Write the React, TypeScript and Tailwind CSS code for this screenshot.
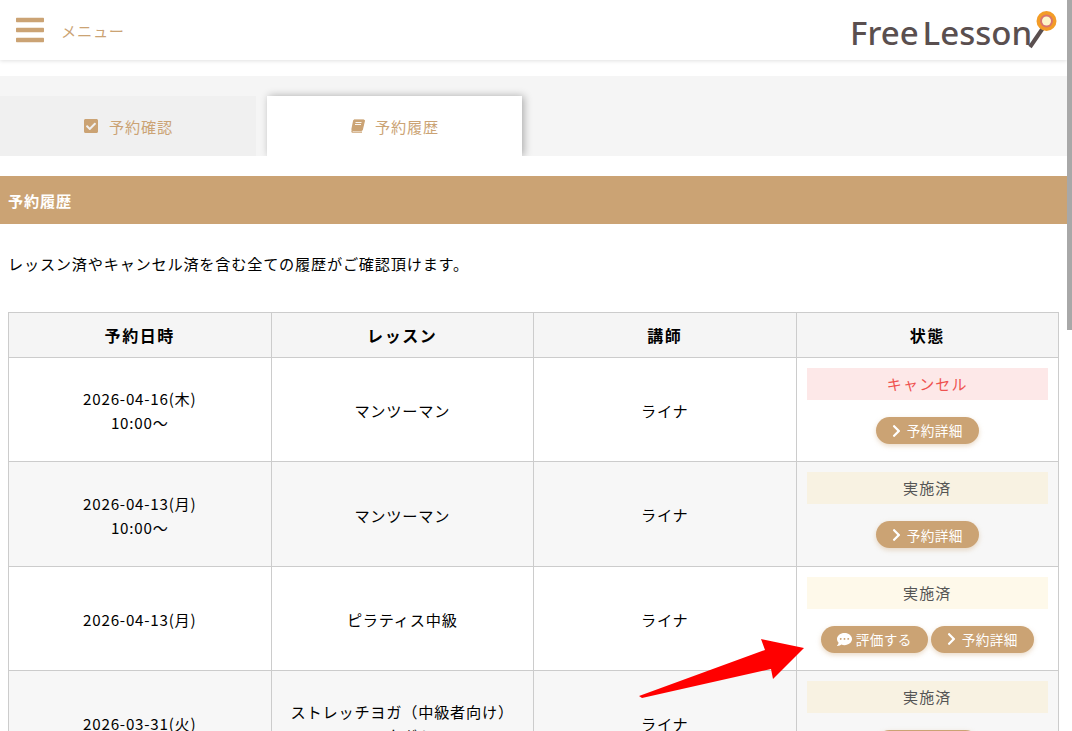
import { FaBars, FaCheckSquare, FaChevronRight, FaCommentDots } from 'react-icons/fa';

const FONT = "font-['Noto_Sans_CJK_JP','Noto_Sans',sans-serif]";

type Row = {
  date: string[];
  lesson: string[];
  status: string;
  statusClass: string;
  review?: boolean;
};

const rows: Row[] = [
  {
    date: ['2026-04-16(木)', '10:00〜'],
    lesson: ['マンツーマン'],
    status: 'キャンセル',
    statusClass: 'bg-[#fde8e8] text-[#ef5350]',
  },
  {
    date: ['2026-04-13(月)', '10:00〜'],
    lesson: ['マンツーマン'],
    status: '実施済',
    statusClass: 'bg-[#f8f2e2] text-[#555555]',
  },
  {
    date: ['2026-04-13(月)'],
    lesson: ['ピラティス中級'],
    status: '実施済',
    statusClass: 'bg-[#fef9ea] text-[#555555]',
    review: true,
  },
  {
    date: ['2026-03-31(火)'],
    lesson: ['ストレッチヨガ（中級者向け）', 'コタガト'],
    status: '実施済',
    statusClass: 'bg-[#f8f2e2] text-[#555555]',
  },
];

function PillButton({ icon, label }: { icon: React.ReactNode; label: string }) {
  return (
    <span className="flex h-[27px] items-center gap-1 rounded-full bg-[#cba374] px-4 text-[13.6px] tracking-[0.03em] text-white shadow-[0_2px_5px_rgba(203,163,116,0.4)]">
      {icon}
      {label}
    </span>
  );
}

// slanted book, the tab icon
function BookIcon() {
  return (
    <svg width="15" height="14" viewBox="0 0 15 14" fill="none">
      <path d="M4 1h9.5q1 0 .8 1l-2 8.5q-.3 1-1.300 1H3q-1.300 0-1 1t1.300.7h8.700" stroke="#cba374" strokeWidth="1.200" />
      <path d="M4 .8h9.500q1 0 .8 1.200l-2 8.500q-.3 1-1.300 1H2.200q-1-.2-.8-1.500L3 2q.2-1.200 1-1.200z" fill="#cba374" />
      <path d="M5.500 3.500h6M5 5.500h6" stroke="#ffffff" strokeWidth="0.900" />
    </svg>
  );
}

function Logo() {
  return (
    <div className="relative h-[40px] w-[200px] shrink-0">
      <span className="absolute top-[1px] left-0 font-['Noto_Sans',sans-serif] text-[33px] leading-[44px] font-medium text-[#5a4f4f]">
        Free<span className="ml-[4px]">Lesson</span>
      </span>
      <svg className="absolute top-0 left-0 overflow-visible" width="200" height="40" viewBox="0 0 200 40">
        <path d="M180 37 L193 18" stroke="#5a4f4f" strokeWidth="4" fill="none" />
        <circle cx="196.500" cy="11" r="10" fill="#f39c26" />
        <circle cx="196.500" cy="11" r="6.500" fill="#d9746c" />
        <circle cx="196.500" cy="11" r="4.500" fill="#fdf6c8" />
      </svg>
    </div>
  );
}

export default function App() {
  return (
    <div className={`relative flex h-[731px] w-[1072px] overflow-hidden bg-white text-black ${FONT}`}>
      <div className="w-[1067px] shrink-0">
        <header className="flex h-[60px] items-center justify-between pr-[17px] pl-[14px] shadow-[0_1px_4px_rgba(0,0,0,0.12)]">
          <div className="flex items-center gap-[15px] text-[#cba374]">
            <FaBars size={32} />
            <span className="text-[15.2px] tracking-[0.05em]">メニュー</span>
          </div>
          <Logo />
        </header>

        <div className="mt-4 flex h-20 items-end gap-[11px] overflow-hidden bg-[#f5f5f5] text-[15.2px] tracking-[0.05em] text-[#cba374]">
          <div className="flex h-[60px] w-64 items-center justify-center gap-[10px] bg-[#f0f0f0]">
            <FaCheckSquare size={16} />
            予約確認
          </div>
          <div className="flex h-[60px] w-[255px] items-center justify-center gap-[10px] bg-white shadow-[2px_0_8px_rgba(0,0,0,0.3)]">
            <BookIcon />
            予約履歴
          </div>
        </div>

        <h1 className="mt-5 flex h-12 items-center bg-[#cba374] pl-2 text-[15.2px] font-bold tracking-[0.055em] text-white">
          予約履歴
        </h1>

        <p className="mt-[28px] ml-2 text-[15.2px] leading-[22px] tracking-[0.05em]">
          レッスン済やキャンセル済を含む全ての履歴がご確認頂けます。
        </p>

        <table className="mt-[38px] ml-2 w-[1051px] table-fixed border-collapse text-center text-[15.2px] tracking-[0.05em]">
          <thead>
            <tr className="h-[45px] bg-[#f5f5f5] text-[16px] font-bold tracking-[0.1em]">
              <th className="border border-[#cccccc]">予約日時</th>
              <th className="border border-[#cccccc]">レッスン</th>
              <th className="border border-[#cccccc]">講師</th>
              <th className="border border-[#cccccc]">状態</th>
            </tr>
          </thead>
          <tbody>
            {rows.map((row, i) => (
              <tr key={i} className={i % 2 === 1 ? 'bg-[#f7f7f7]' : 'bg-white'}>
                <td className="border border-[#cccccc] pt-[1px] leading-6">
                  {row.date.map((line) => (
                    <div key={line}>{line}</div>
                  ))}
                </td>
                <td className="border border-[#cccccc] pt-[1px] leading-6">
                  {row.lesson.map((line) => (
                    <div key={line}>{line}</div>
                  ))}
                </td>
                <td className="border border-[#cccccc] pt-[1px]">ライナ</td>
                <td className="border border-[#cccccc] px-[10px] pt-[10px] pb-[17.4px]">
                  <div className={`flex h-8 items-center justify-center text-[15px] tracking-[0.08em] ${row.statusClass}`}>
                    {row.status}
                  </div>
                  <div className="mt-[17px] flex justify-center gap-[3px]">
                    {row.review && <PillButton icon={<FaCommentDots size={15} />} label="評価する" />}
                    <PillButton icon={<FaChevronRight className="mr-[2px] h-[14px] w-[9px]" />} label="予約詳細" />
                  </div>
                </td>
              </tr>
            ))}
          </tbody>
        </table>
      </div>

      <div className="flex-1 bg-white">
        <div className="h-[330px] bg-[#a8a8a8]" />
      </div>

      <svg className="pointer-events-none absolute top-0 left-0" width="1072" height="731" viewBox="0 0 1072 731">
        <polygon points="804,648 761,639 765,650 639,696 642,698 771,669 773,679" fill="#ff0000" />
      </svg>
    </div>
  );
}
